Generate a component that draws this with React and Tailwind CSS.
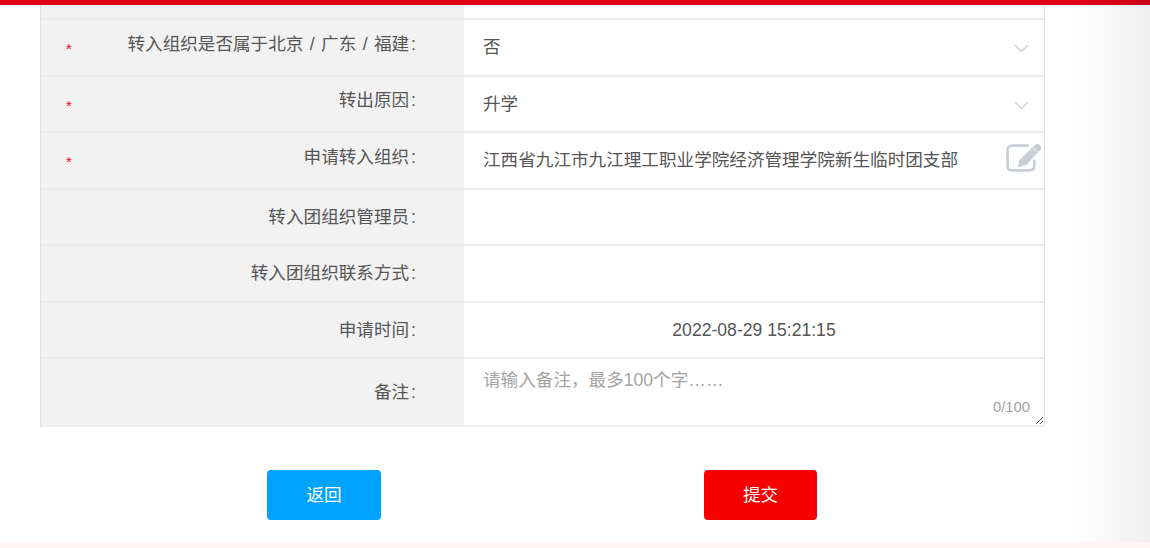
import React from 'react';

function Chevron() {
  return (
    <svg width="15" height="9" viewBox="0 0 15 9" fill="none" className="absolute right-[15px] top-[24px]">
      <polyline points="1,1 7.5,7.5 14,1" stroke="#c9cdd4" strokeWidth="1.3" />
    </svg>
  );
}

function EditIcon() {
  return (
    <svg width="37" height="32" viewBox="0 0 36 31" fill="none" className="absolute right-[2px] top-[9px]">
      <path d="M23 3.5H7Q2.5 3.5 2.5 8V23Q2.5 27.5 7 27.5H24Q28.5 27.5 28.5 23V17" stroke="#c9ced6" strokeWidth="2.6" />
      <path d="M12.5 24.5L14 17.5L29.5 2.5Q31 1 33 2L35 4Q36 5.5 34.5 7.5L20.5 22.5Z" fill="#c9ced6" />
      <path d="M27 5.5L32.5 10.5" stroke="#fff" strokeWidth="0.8" />
    </svg>
  );
}

function Row({ label, required, last, height = 'h-[56.5px]', children }) {
  return (
    <div className={`flex ${height} ${last ? '' : 'border-b-2 border-[#ececec]'}`}>
      <div className={`relative w-[423px] shrink-0 bg-[#f2f2f2] flex justify-end pr-[48px] items-center [word-spacing:1.5px] ${required ? 'pb-[7px]' : ''}`}>
        {required && <span className="absolute left-[25px] top-[21px] text-[15px] leading-4 text-[#f00]">*</span>}
        <span>{label}<span className="ml-[2px]">:</span></span>
      </div>
      <div className="relative flex-1 bg-white flex items-center pl-[19px]">{children}</div>
    </div>
  );
}

export default function App() {
  return (
    <div className="w-[1150px] h-[548px] overflow-hidden flex flex-col bg-white text-[17.6px] text-[#555] font-['Liberation_Sans','Noto_Sans_CJK_SC',sans-serif]">
      <div className="h-[5px] shrink-0 bg-[linear-gradient(90deg,#e00015_1090px,#c90018_1150px)]" />
      <div className="flex-1 pl-[40px] bg-[linear-gradient(90deg,#fff_1075px,#efefef_1150px)]">
        <div className="w-[1005px] border-l border-r border-b-2 border-l-[#dcdcdc] border-r-[#dedede] border-b-[#ececec] rounded-br-[4px] overflow-hidden">
          <div className="flex h-[15px] border-b-2 border-[#ececec]">
            <div className="w-[423px] bg-[#f2f2f2]" />
            <div className="flex-1 bg-white" />
          </div>
          <Row label="转入组织是否属于北京 / 广东 / 福建" required>
            否
            <Chevron />
          </Row>
          <Row label="转出原因" required>
            升学
            <Chevron />
          </Row>
          <Row label="申请转入组织" required>
            江西省九江市九江理工职业学院经济管理学院新生临时团支部
            <EditIcon />
          </Row>
          <Row label="转入团组织管理员" />
          <Row label="转入团组织联系方式" />
          <Row label="申请时间">
            <span className="w-full text-center pr-[19px]">2022-08-29 15:21:15</span>
          </Row>
          <Row label="备注" last height="h-[65.5px]">
            <textarea
              className="absolute inset-0 pl-[19px] pt-[8px] bg-white outline-none placeholder:text-[#a3a3a3]"
              placeholder="请输入备注，最多100个字……"
            />
            <span className="absolute right-[14px] bottom-[10px] text-[14.8px] leading-4 text-[#a3a3a3]">0/100</span>
          </Row>
        </div>
        <div className="flex gap-[323px] pl-[227px] pt-[43px]">
          <button className="w-[114px] h-[50px] rounded-[4px] pt-[1px] bg-[#00a3ff] text-white">返回</button>
          <button className="w-[113px] h-[50px] rounded-[4px] pt-[1px] bg-[#f90000] text-white">提交</button>
        </div>
      </div>
      <div className="h-[6px] bg-[#fdf5f6] shrink-0" />
    </div>
  );
}
